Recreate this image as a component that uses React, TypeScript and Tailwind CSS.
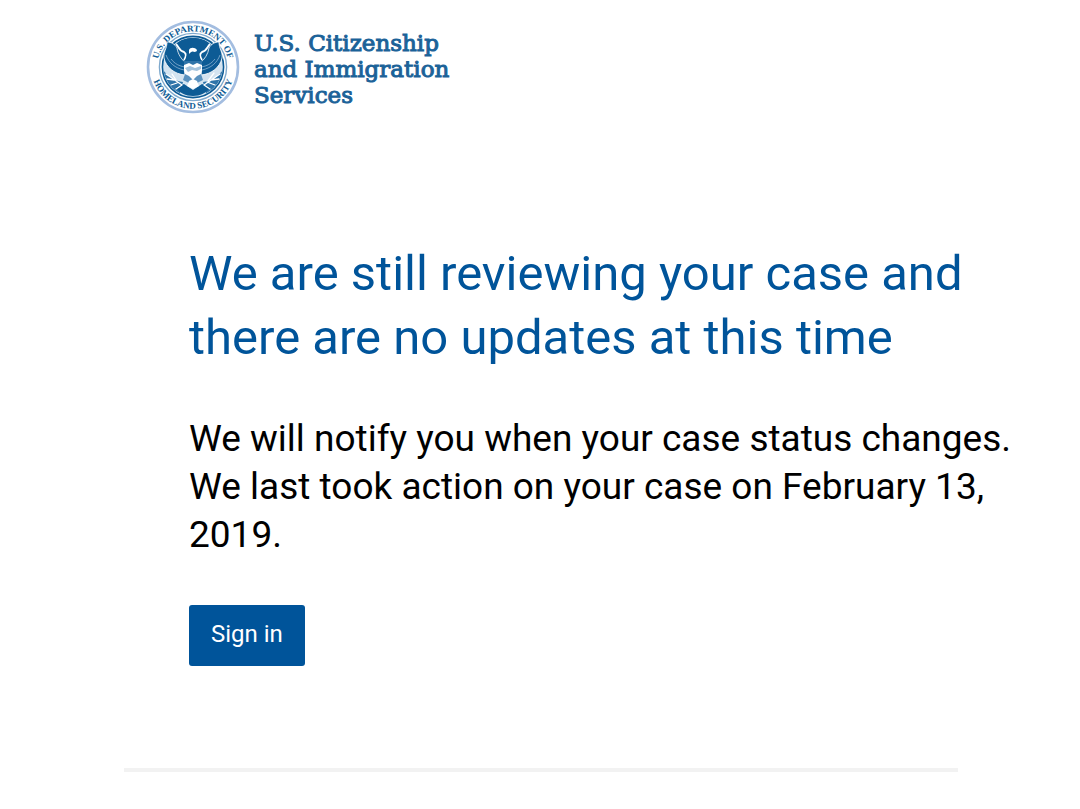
const TEXT_FONT = "font-['Roboto','Liberation_Sans',sans-serif]";
const SEAL_FONT = "font-['Liberation_Serif',serif] font-bold";
const WORDMARK_FONT = "font-['DejaVu_Serif','Liberation_Serif',serif]";

// --------------------------------------------------------------------- seal --

function AgencySeal() {
  return (
    <svg viewBox="0 0 94 94" className="size-[94px] shrink-0" role="img" aria-label="Department of Homeland Security seal">
      <defs>
        <path id="seal-top" d="M 14.5 62.2 A 35.8 35.8 0 1 1 79.5 62.2" />
        <path id="seal-bottom" d="M 5.2 47 A 41.8 41.8 0 0 0 88.8 47" />
        <clipPath id="seal-disc">
          <circle cx="47" cy="47" r="29.5" />
        </clipPath>
      </defs>

      {/* Rings */}
      <circle cx="47" cy="47" r="45" fill="#fff" stroke="#a3bde0" strokeWidth="2.6" />
      <circle cx="47" cy="47" r="33.6" fill="#fff" stroke="#7fa9cd" strokeWidth="1.4" />
      <circle cx="47" cy="47" r="30.6" fill="#d3e3f0" stroke="#0d5b95" strokeWidth="1.6" />

      {/* Lettering */}
      <g className={SEAL_FONT} fill="#0d5b95" fontSize="9">
        <text textAnchor="middle">
          <textPath href="#seal-top" startOffset="50%">
            U.S. DEPARTMENT OF
          </textPath>
        </text>
        <text textAnchor="middle">
          <textPath href="#seal-bottom" startOffset="50%">
            HOMELAND SECURITY
          </textPath>
        </text>
      </g>

      {/* Sky, branch and arrows */}
      <g clipPath="url(#seal-disc)">
        <path d="M28 26 C36 15 58 15 66 26 L58 44 H36 Z" fill="#0d5b95" />
        <path d="M15 47 C20 55 28 61 37 62 L33 77 C22 71 15 60 15 47 Z" fill="#2f74a9" />
        <path d="M79 47 C74 55 66 61 57 62 L61 77 C72 71 79 60 79 47 Z" fill="#2f74a9" />
        <path d="M30 67 L38 64 L47 70 L56 64 L64 67 C58 79 36 79 30 67 Z" fill="#0d5b95" />
        <g stroke="#fff" strokeWidth="1.3" strokeLinecap="round" fill="none">
          <path d="M20 54 L36 65 M21 59 L28 60 M25 65 L31 63 M26 54 L30 60 M30 69 L36 65" />
          <path d="M74 54 L58 65 M73 59 L65 60 M69 65 L61 62 M68 53 L62 61 M64 69 L58 65" />
        </g>
      </g>

      {/* Wings */}
      <g fill="#0d5b95" stroke="#fff" strokeWidth="0.8">
        <path d="M21 22 C25 22 29 24 31 28 C32 34 35 39 40 43 L39 55 C28 54 20 47 18 38 C17 32 21 29 21 22 Z" />
        <path d="M73 22 C69 22 65 24 63 28 C62 34 59 39 54 43 L55 55 C66 54 74 47 76 38 C77 32 73 29 73 22 Z" />
      </g>
      <g fill="none" stroke="#8db3d3" strokeWidth="0.8">
        <path d="M20 35 C23 43 29 48 38 50 M25 39 C29 44 33 46 39 47" />
        <path d="M74 35 C71 43 65 48 56 50 M69 39 C65 44 61 46 55 47" />
      </g>
      <g fill="none" stroke="#fff" strokeWidth="1.8">
        <path d="M30 24 C33 27 33 31 38 32 C41 34 40 37 38 40" />
        <path d="M64 24 C61 27 61 31 56 32 C53 34 54 37 56 40" />
      </g>

      {/* Head */}
      <path d="M43 30 C44 27 49 27 51 30 C51 31 50 32 48 32 C46 31 45 32 43 34 Z" fill="#fff" />
      <path d="M41 34 H53 L55 41 H39 Z" fill="#0d5b95" />

      {/* Shield and tail */}
      <path d="M38 41 H56 V50 C56 56 52 60 47 62 C42 60 38 56 38 50 Z" fill="#fff" />
      <path d="M38 41 H56 V45 L51 43 L47 45 L43 43 L38 45 Z" fill="#2f74a9" />
      <path d="M39 48 L44 46 L49 48 L55 46 V49 L51 51 L46 50 L42 52 Z" fill="#a3c3dd" />
      <path d="M39 54 L43 56 L47 60 L43 63 L37 60 Z M55 54 L51 56 L47 60 L51 63 L57 60 Z" fill="#5b92bf" />
      <path d="M43 61 L47 59 L51 61 L53 66 L47 69 L41 66 Z" fill="#fff" />
    </svg>
  );
}

// --------------------------------------------------------------------- page --

export default function App() {
  return (
    <div className={`bg-white pb-9 text-black ${TEXT_FONT}`}>
      <header className="flex items-start gap-3.5 pt-5 pl-[146px]">
        <AgencySeal />
        <p className={`pt-2.5 text-[23px] leading-[26px] text-[#1b6298] [-webkit-text-stroke:1px_#1b6298] ${WORDMARK_FONT}`}>
          U.S. Citizenship
          <br />
          and Immigration
          <br />
          Services
        </p>
      </header>

      <main className="pt-32 pr-[60px] pl-[189px]">
        <h1 className="text-[49px] leading-[64px] text-[#00549a]">
          We are still reviewing your case and there are no updates at this time
        </h1>
        <p className="mt-[45px] text-[37px] leading-[48px]">
          We will notify you when your case status changes. We last took action on your case on February 13, 2019.
        </p>
        <button
          type="button"
          className="mt-[46px] h-[61px] cursor-pointer rounded-[3px] bg-[#00549a] px-[22px] pb-1 text-[24px] text-white"
        >
          Sign in
        </button>
      </main>

      <hr className="mt-[102px] mr-[122px] ml-31 border-t-4 border-[#f2f2f2]" />
    </div>
  );
}
